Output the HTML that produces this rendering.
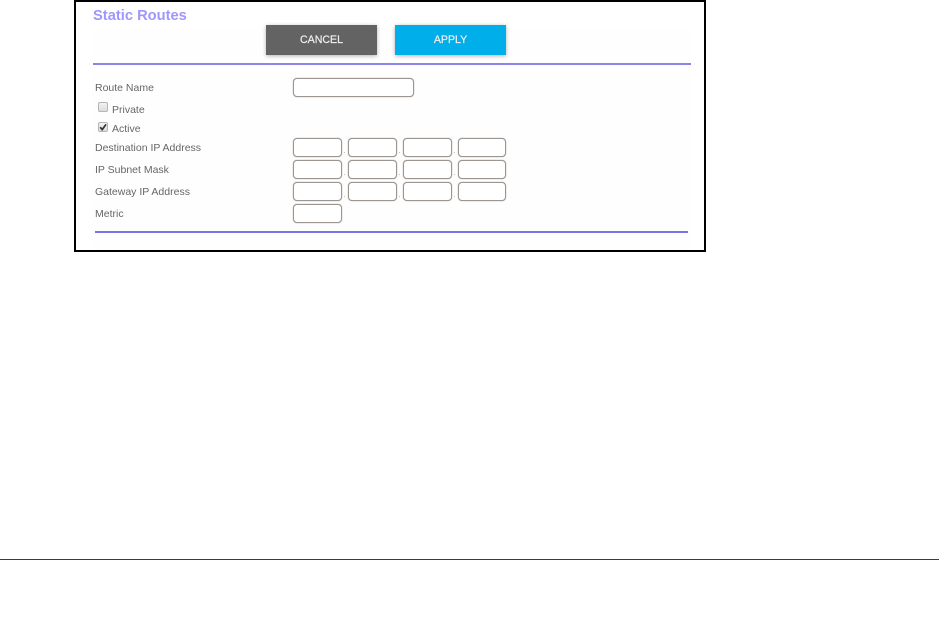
<!DOCTYPE html>
<html>
<head>
<meta charset="utf-8">
<style>
html,body{margin:0;padding:0;background:#fff;width:939px;height:629px;overflow:hidden;font-family:"Liberation Sans",Arial,sans-serif;}
.a{position:absolute;}
#frame{left:74px;top:0;width:632px;height:252px;border:2px solid #000;box-sizing:border-box;}
#panel{left:92px;top:28px;width:599px;height:222px;background:#fefefe;}
.t{position:absolute;font-size:10.5px;line-height:14px;color:#666;white-space:nowrap;filter:blur(.3px);}
.i{position:absolute;box-sizing:border-box;height:19px;border:1px solid #9c9590;border-radius:4px;background:#fff;box-shadow:0 0 1px rgba(130,122,118,.8);}
.d{position:absolute;width:1px;height:1px;background:#c4c0bd;}
.b{position:absolute;top:25px;width:111px;height:30px;line-height:30px;text-align:center;font-size:10.6px;color:#f0f0f0;box-shadow:0 1px 4px rgba(0,0,0,.3);}
.b span{filter:blur(.3px);display:inline-block;-webkit-text-stroke:.2px #f0f0f0;}
.c{position:absolute;left:98px;width:10px;height:10px;box-sizing:border-box;border:1px solid #b5b5b5;border-radius:2px;background:linear-gradient(#f2f2f2,#dcdcdc);}
</style>
</head>
<body>
<div class="a" id="panel"></div>
<div class="a" id="frame"></div>

<div class="a" style="left:93px;top:8px;font-size:14.7px;line-height:16px;font-weight:bold;color:#a096ff;white-space:nowrap;filter:blur(.3px);">Static Routes</div>

<div class="b" style="left:266px;background:#636363;"><span>CANCEL</span></div>
<div class="b" style="left:395px;background:#00aeea;"><span>APPLY</span></div>

<div class="a" style="left:93px;top:63px;width:598px;height:2px;background:#8d84ea;"></div>

<div class="t" style="left:95px;top:81px;">Route Name</div>
<div class="i" style="left:293px;top:78px;width:121px;"></div>

<div class="c" style="top:102px;"></div>
<div class="t" style="left:112px;top:103px;">Private</div>
<div class="c" style="top:122px;"></div>
<svg class="a" style="left:98px;top:122px;" width="10" height="10" viewBox="0 0 10 10"><path d="M2.2 5.2 L4.2 7.6 L8 2.4" fill="none" stroke="#333" stroke-width="1.7"/></svg>
<div class="t" style="left:112px;top:122px;">Active</div>

<div class="t" style="left:95px;top:141px;">Destination IP Address</div>
<div class="i" style="left:293px;top:138px;width:49px;"></div>
<div class="d" style="left:344px;top:152px;"></div>
<div class="i" style="left:348px;top:138px;width:49px;"></div>
<div class="d" style="left:399px;top:152px;"></div>
<div class="i" style="left:403px;top:138px;width:49px;"></div>
<div class="d" style="left:454px;top:152px;"></div>
<div class="i" style="left:458px;top:138px;width:48px;"></div>

<div class="t" style="left:95px;top:163px;">IP Subnet Mask</div>
<div class="i" style="left:293px;top:160px;width:49px;"></div>
<div class="d" style="left:344px;top:174px;"></div>
<div class="i" style="left:348px;top:160px;width:49px;"></div>
<div class="d" style="left:399px;top:174px;"></div>
<div class="i" style="left:403px;top:160px;width:49px;"></div>
<div class="d" style="left:454px;top:174px;"></div>
<div class="i" style="left:458px;top:160px;width:48px;"></div>

<div class="t" style="left:95px;top:185px;">Gateway IP Address</div>
<div class="i" style="left:293px;top:182px;width:49px;"></div>
<div class="d" style="left:344px;top:196px;"></div>
<div class="i" style="left:348px;top:182px;width:49px;"></div>
<div class="d" style="left:399px;top:196px;"></div>
<div class="i" style="left:403px;top:182px;width:49px;"></div>
<div class="d" style="left:454px;top:196px;"></div>
<div class="i" style="left:458px;top:182px;width:48px;"></div>

<div class="t" style="left:95px;top:207px;">Metric</div>
<div class="i" style="left:293px;top:204px;width:49px;"></div>

<div class="a" style="left:95px;top:231px;width:593px;height:2px;background:#7a72e8;"></div>

<div class="a" style="left:0;top:559px;width:939px;height:1px;background:#4b2a78;"></div>
</body>
</html>
